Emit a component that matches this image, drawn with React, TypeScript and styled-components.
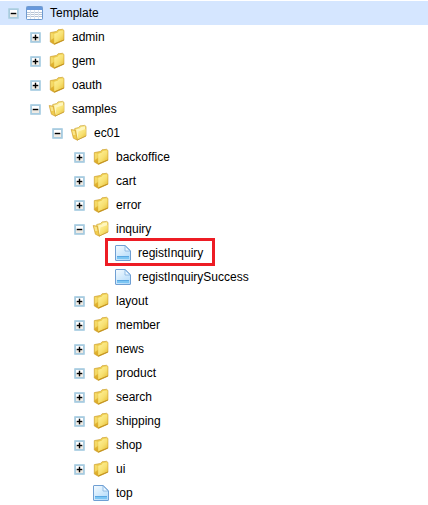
import React from "react";
import styled, { createGlobalStyle } from "styled-components";

const GlobalStyle = createGlobalStyle`
  body {
    margin: 0;
    background: #fff;
    overflow: hidden;
  }
`;

const Tree = styled.ul`
  list-style: none;
  margin: 0;
  padding: 1px 0 0;
  font: 12px/24px "Liberation Sans", Arial, sans-serif;
  color: #000;
`;

const Row = styled.li<{ $depth: number; $selected?: boolean }>`
  display: flex;
  align-items: center;
  height: 24px;
  padding-left: ${(p) => 8 + p.$depth * 22}px;
  background: ${(p) => (p.$selected ? "#d5e6ff" : "transparent")};
`;

const ToggleSlot = styled.span`
  width: 11px;
  height: 11px;
  margin-right: 7px;
  display: flex;
`;

const IconSlot = styled.span`
  width: 18px;
  height: 18px;
  margin-right: 6px;
  display: flex;
`;

const Label = styled.span<{ $marked?: boolean }>`
  position: relative;
  white-space: nowrap;

  &::before {
    content: "";
    display: ${(p) => (p.$marked ? "block" : "none")};
    position: absolute;
    box-sizing: border-box;
    left: -33px;
    top: -3px;
    width: 110px;
    height: 28px;
    border: 3px solid #ed1c24;
  }
`;

type Kind = "table" | "folder" | "open" | "file";

function Toggle({ open }: { open: boolean }) {
  return (
    <svg width="11" height="11" viewBox="0 0 11 11">
      <rect width="11" height="11" rx="1" fill="#b4d4e6" />
      <rect x="1" y="1" width="9" height="9" fill="#a9cbdf" />
      <rect x="2" y="2" width="7" height="7" fill="#fff" />
      <rect x="2" y="6" width="7" height="3" fill="#efebe4" />
      <rect x="2.7" y="4.8" width="5.6" height="1.4" fill="#000" />
      {!open && <rect x="4.8" y="2.7" width="1.4" height="5.6" fill="#000" />}
    </svg>
  );
}

function NodeIcon({ kind }: { kind: Kind }) {
  return (
    <svg width="18" height="18" viewBox="0 0 18 18">
      <defs>
        <linearGradient id="gold" x1="0" y1="0" x2="0.8" y2="1">
          <stop offset="0" stopColor="#fff3a0" />
          <stop offset="0.6" stopColor="#f7e070" />
          <stop offset="1" stopColor="#e8c23c" />
        </linearGradient>
        <linearGradient id="spine" x1="0" y1="0" x2="0" y2="1">
          <stop offset="0" stopColor="#f3d65a" />
          <stop offset="1" stopColor="#d9a520" />
        </linearGradient>
        <linearGradient id="page" x1="0" y1="0" x2="0.7" y2="1">
          <stop offset="0" stopColor="#f5fbff" />
          <stop offset="1" stopColor="#b5dcfa" />
        </linearGradient>
      </defs>
      {kind === "table" && (
        <>
          <rect x="0.5" y="2.5" width="16" height="13" rx="0.7" fill="#fff" stroke="#6f9bd0" />
          <rect x="1" y="3" width="15" height="3" fill="#6798dc" />
          <path d="M1 8.5h15M1 10.5h15M1 12.5h15" stroke="#b9c4d4" />
          <path d="M4.5 6v9M8.5 6v9M12.5 6v9" stroke="#dce5f0" />
        </>
      )}
      {kind === "folder" && (
        <>
          <path d="M2.3 4.6 8.6 3.4 10 1.8 14.6 1.3 15.9 2.4V12.2L6.5 16.4 2.3 14Z" fill="url(#spine)" stroke="#cda134" strokeWidth="0.7" />
          <path d="M6.2 5.7 9.6 4.8 10.9 2.9 15.4 2.4V11.7L6.2 15.4Z" fill="url(#gold)" />
          <path d="M2.8 5.1 5.7 5.8V10L2.8 12Z" fill="#f8e070" opacity="0.8" />
          <path d="M6.4 15.9 15.8 12" stroke="#bd8b1c" strokeWidth="0.8" />
        </>
      )}
      {kind === "open" && (
        <>
          <path d="M4.7 4.5 8.7 3.5 10 1.9 14.7 1.4 16 2.4V12L7.2 16 5 14Z" fill="#f6e27a" stroke="#cfa83e" strokeWidth="0.7" />
          <path d="M6.2 5.3 9.8 4.5 11 2.9 15 2.5V11L7.2 14Z" fill="#fff6bd" />
          <path d="M8.3 7.4 15.6 5V11.8L7.6 15.4Z" fill="url(#gold)" />
          <path d="M1.2 5.5 5.4 6.2 7.4 16.2 3.4 14.2Z" fill="#f1cc4d" stroke="#d0a136" strokeWidth="0.7" />
          <path d="M2.2 6.6 4.7 7 5.4 11 3.2 11Z" fill="#f9e58b" />
          <path d="M7.4 16 15.9 12" stroke="#c4942a" strokeWidth="0.7" />
        </>
      )}
      {kind === "file" && (
        <>
          <path d="M1.5 2C1.5 1.6 1.8 1.5 2 1.5H11.2L16.5 6.7V16C16.5 16.4 16.3 16.5 16 16.5H2C1.7 16.5 1.5 16.3 1.5 16Z" fill="url(#page)" stroke="#6f9fd3" />
          <path d="M11 2V7H16Z" fill="#e9f6ff" stroke="#83b2df" strokeWidth="0.8" />
          <rect x="3" y="12" width="12" height="3" fill="#7cc6f3" />
          <path d="M3 12.5H15" stroke="#5aa8e3" />
        </>
      )}
    </svg>
  );
}

interface TreeItem {
  label: string;
  depth: number;
  kind: Kind;
  selected?: boolean;
  marked?: boolean;
}

const closed = (depth: number, labels: string[]): TreeItem[] =>
  labels.map((label) => ({ label, depth, kind: "folder" }));

const items: TreeItem[] = [
  { label: "Template", depth: 0, kind: "table", selected: true },
  ...closed(1, ["admin", "gem", "oauth"]),
  { label: "samples", depth: 1, kind: "open" },
  { label: "ec01", depth: 2, kind: "open" },
  ...closed(3, ["backoffice", "cart", "error"]),
  { label: "inquiry", depth: 3, kind: "open" },
  { label: "registInquiry", depth: 4, kind: "file", marked: true },
  { label: "registInquirySuccess", depth: 4, kind: "file" },
  ...closed(3, ["layout", "member", "news", "product", "search", "shipping", "shop", "ui"]),
  { label: "top", depth: 3, kind: "file" },
];

export default function App() {
  return (
    <>
      <GlobalStyle />
      <Tree>
        {items.map((item) => (
          <Row key={item.label} $depth={item.depth} $selected={item.selected}>
            <ToggleSlot>
              {item.kind !== "file" && <Toggle open={item.kind !== "folder"} />}
            </ToggleSlot>
            <IconSlot>
              <NodeIcon kind={item.kind} />
            </IconSlot>
            <Label $marked={item.marked}>{item.label}</Label>
          </Row>
        ))}
      </Tree>
    </>
  );
}
